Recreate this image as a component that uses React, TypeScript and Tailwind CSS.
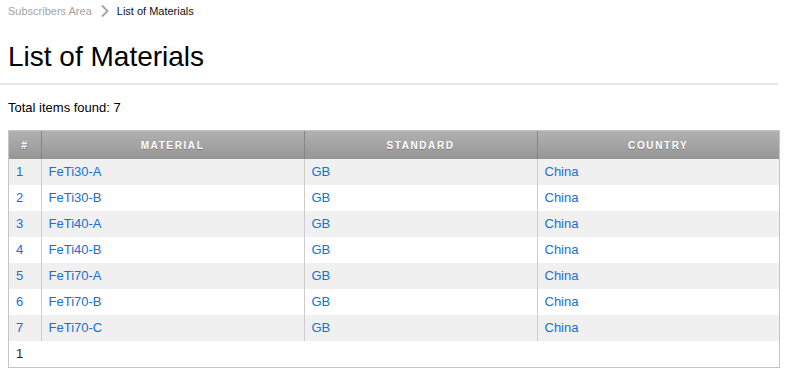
const rows = [
  { id: 1, material: "FeTi30-A" },
  { id: 2, material: "FeTi30-B" },
  { id: 3, material: "FeTi40-A" },
  { id: 4, material: "FeTi40-B" },
  { id: 5, material: "FeTi70-A" },
  { id: 6, material: "FeTi70-B" },
  { id: 7, material: "FeTi70-C" },
];

const Breadcrumb = () => {
  return (
    <div className="flex items-center h-[23px] text-[11px] leading-[13px] pb-[1px]">
      <span className="text-[#a3a3a3]">Subscribers Area</span>
      <svg width="10" height="14" viewBox="0 0 10 14" className="ml-[8px] mr-[7px]">
        <path d="M2 1.5 L7.5 7 L2 12.5" stroke="#a8a8a8" strokeWidth="2" fill="none" />
      </svg>
      <span className="text-[#111]">List of Materials</span>
    </div>
  );
};

const MaterialsTable = () => {
  return (
    <div className="w-[772px] border border-[#c4c4c4]">
      <table className="w-full border-collapse text-[13px]">
        <thead>
          <tr className="h-[28px] bg-gradient-to-b from-[#b1b1b1] to-[#969696] text-white text-[10px] font-bold tracking-[1.6px] uppercase [text-shadow:0_1px_0_rgba(0,0,0,0.25)]">
            <th className="w-[32px] border-r border-[#858585] font-bold">#</th>
            <th className="w-[263px] border-r border-[#858585] font-bold">Material</th>
            <th className="w-[233px] border-r border-[#858585] font-bold">Standard</th>
            <th className="font-bold">Country</th>
          </tr>
        </thead>
        <tbody>
          {rows.map((row) => (
            <tr
              key={row.id}
              className={`h-[26px] ${row.id % 2 === 1 ? "bg-[#f0f0f0]" : "bg-white"} text-[#1a6ed8]`}
            >
              <td className="pl-[7px] border-r border-[#cdcdcd]">{row.id}</td>
              <td className="pl-[7px] border-r border-[#cdcdcd]">{row.material}</td>
              <td className="pl-[7px] border-r border-[#cdcdcd]">GB</td>
              <td className="pl-[7px]">China</td>
            </tr>
          ))}
          <tr className="h-[26px] bg-white">
            <td colSpan={4} className="pl-[7px] text-[#222]">
              1
            </td>
          </tr>
        </tbody>
      </table>
    </div>
  );
};

export default function App() {
  return (
    <div className="w-[790px] h-[378px] bg-white font-['Liberation_Sans',Arial,sans-serif] text-[#111]">
      <div className="pl-2">
        <Breadcrumb />
      </div>
      <div className="w-[778px] border-b-2 border-[#e7e7e7] pl-2 pt-[18px] pb-[10px]">
        <h1 className="text-[28px] leading-[32px] text-black">List of Materials</h1>
      </div>
      <div className="pl-2">
        <div className="mt-[15px] text-[13px] leading-[15px] text-black">Total items found: 7</div>
        <div className="mt-[15px]">
          <MaterialsTable />
        </div>
      </div>
    </div>
  );
}
